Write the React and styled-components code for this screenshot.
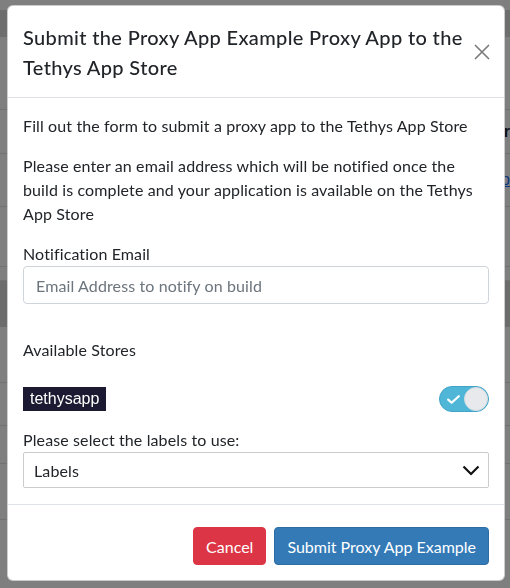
import React from "react";
import styled, { createGlobalStyle } from "styled-components";

const GlobalStyle = createGlobalStyle`
  html, body {
    margin: 0;
    padding: 0;
    background: #ffffff;
    font-family: "Lato", "Segoe UI", "Noto Sans", sans-serif;
    color: #212529;
  }
  * {
    box-sizing: border-box;
  }
`;

// Page content that sits behind the backdrop
const Page = styled.div`
  display: flex;
  flex-direction: column;
  width: 510px;
  height: 588px;
  overflow: hidden;
`;

const Band = styled.div`
  height: ${({ $h }) => $h}px;
  background: ${({ $bg }) => $bg || "#ffffff"};
  border-bottom: ${({ $line }) => ($line ? "1px solid #dee2e6" : "none")};
  display: flex;
  justify-content: flex-end;
  align-items: center;
  font-family: "Liberation Sans", Arial, sans-serif;
  font-size: 16px;
`;

const BgText = styled.span`
  font-weight: ${({ $bold }) => ($bold ? 700 : 400)};
  color: ${({ $link }) => ($link ? "#0d6efd" : "#212529")};
  text-decoration: ${({ $link }) => ($link ? "underline" : "none")};
`;

// Dark backdrop
const Backdrop = styled.div`
  position: fixed;
  inset: 0;
  background: rgba(0, 0, 0, 0.5);
`;

const ModalLayer = styled.div`
  position: fixed;
  inset: 0;
  padding: 5px 5px 0 7px;
`;

const Dialog = styled.div`
  width: 498px;
  background: #ffffff;
  border: 1px solid rgba(0, 0, 0, 0.2);
  border-radius: 6px;
  display: flex;
  flex-direction: column;
`;

const Header = styled.div`
  display: flex;
  align-items: center;
  justify-content: space-between;
  padding: 16px 13px 15px 15px;
  border-bottom: 1px solid #dee2e6;
`;

const Title = styled.h5`
  margin: 0;
  font-size: 20px;
  line-height: 30px;
  font-weight: 500;
  letter-spacing: 0.35px;
  color: #212529;
  max-width: 448px;
`;

const CloseButton = styled.button`
  background: none;
  border: none;
  padding: 0;
  width: 18px;
  height: 18px;
  display: flex;
  align-items: center;
  justify-content: center;
  color: #7a7a7a;
  cursor: pointer;
`;

const Body = styled.div`
  padding: 16px 15px;
  display: flex;
  flex-direction: column;
  letter-spacing: 0.12px;
`;

const Text = styled.p`
  margin: 0 0 ${({ $mb }) => ($mb ?? 16)}px;
  font-size: 16px;
  line-height: 24px;
  color: #212529;
`;

const Label = styled.label`
  display: block;
  margin: ${({ $mt }) => $mt || 0}px 0 0;
  font-size: 16px;
  line-height: 24px;
  color: #212529;
`;

const Input = styled.input`
  width: 100%;
  height: 38px;
  padding: 6px 12px;
  border: 1px solid #ced4da;
  border-radius: 4px;
  font-family: inherit;
  font-size: 16px;
  letter-spacing: 0.12px;
  color: #495057;
  outline: none;

  &::placeholder {
    color: #6c757d;
  }
`;

const StoreRow = styled.div`
  display: flex;
  align-items: center;
  justify-content: space-between;
  margin: 24px 0 16px;
  height: 26px;
`;

const Badge = styled.span`
  display: inline-block;
  height: 24px;
  line-height: 24px;
  padding: 0 7px;
  background: #1b1a32;
  color: #ffffff;
  font-family: "Liberation Sans", Arial, sans-serif;
  font-size: 16px;
  letter-spacing: 0;
`;

const Toggle = styled.span`
  width: 50px;
  height: 26px;
  border-radius: 13px;
  background: #4fb6d8;
  border: 1px solid #3fa4c6;
  display: flex;
  align-items: center;
  justify-content: space-between;
  padding: 0 0 0 7px;
`;

const Knob = styled.span`
  width: 24px;
  height: 24px;
  border-radius: 50%;
  background: #e7e9ec;
  border: 1px solid #d4dde2;
`;

const SelectBox = styled.div`
  height: 36px;
  border: 1px solid #cccccc;
  border-radius: 2px;
  display: flex;
  align-items: center;
  justify-content: space-between;
  padding: 0 8px 0 10px;
  font-size: 16px;
  color: #212529;
`;

const Footer = styled.div`
  display: flex;
  justify-content: flex-end;
  gap: 8px;
  padding: 22px 15px 15px;
  border-top: 1px solid #dee2e6;
`;

const Button = styled.button`
  height: 38px;
  padding: 0 12px;
  border-radius: 4px;
  border: 1px solid ${({ $variant }) => ($variant === "danger" ? "#dc3545" : "#2e6da4")};
  background: ${({ $variant }) => ($variant === "danger" ? "#dc3545" : "#337ab7")};
  color: #ffffff;
  font-family: inherit;
  font-size: 16px;
  letter-spacing: 0;
  cursor: pointer;
`;

const bands = [
  { h: 10 },
  { h: 27, bg: "#dcdcdc" },
  { h: 73, line: true },
  { h: 44, line: true, text: "r", bold: true },
  { h: 53, line: true, text: "p", link: true },
  { h: 60, line: true },
  { h: 14, line: true },
  { h: 46, bg: "#d8d8d8" },
  { h: 56, line: true },
  { h: 43, line: true },
  { h: 38, line: true },
  { h: 56, line: true },
  { h: 60 },
];

export default function App() {
  return (
    <>
      <GlobalStyle />
      <Page>
        {bands.map((b, i) => (
          <Band key={i} $h={b.h} $bg={b.bg} $line={b.line}>
            {b.text && (
              <BgText $bold={b.bold} $link={b.link}>
                {b.text}
              </BgText>
            )}
          </Band>
        ))}
      </Page>
      <Backdrop />
      <ModalLayer>
        <Dialog role="dialog">
          <Header>
            <Title>Submit the Proxy App Example Proxy App to the Tethys App Store</Title>
            <CloseButton aria-label="Close">
              <svg width="16" height="16" viewBox="0 0 16 16">
                <path d="M1 1 L15 15 M15 1 L1 15" stroke="currentColor" strokeWidth="1.6" fill="none" />
              </svg>
            </CloseButton>
          </Header>

          <Body>
            <Text>Fill out the form to submit a proxy app to the Tethys App Store</Text>
            <Text>
              Please enter an email address which will be notified once the build is complete and your
              application is available on the Tethys App Store
            </Text>
            <Label htmlFor="notify-email">Notification Email</Label>
            <Input id="notify-email" type="email" placeholder="Email Address to notify on build" />

            <Label $mt={34}>Available Stores</Label>
            <StoreRow>
              <Badge>tethysapp</Badge>
              <Toggle>
                <svg width="13" height="9" viewBox="0 0 13 9">
                  <path d="M1.2 4.6 L4.6 7.8 L11.8 1.2" stroke="#ffffff" strokeWidth="2.2" fill="none" strokeLinecap="round" strokeLinejoin="round" />
                </svg>
                <Knob />
              </Toggle>
            </StoreRow>

            <Label>Please select the labels to use:</Label>
            <SelectBox>
              <span>Labels</span>
              <svg width="18" height="11" viewBox="0 0 18 11">
                <path d="M1.5 1.5 L9 9 L16.5 1.5" stroke="#111111" strokeWidth="2.2" fill="none" />
              </svg>
            </SelectBox>
          </Body>

          <Footer>
            <Button $variant="danger">Cancel</Button>
            <Button $variant="primary">Submit Proxy App Example</Button>
          </Footer>
        </Dialog>
      </ModalLayer>
    </>
  );
}
